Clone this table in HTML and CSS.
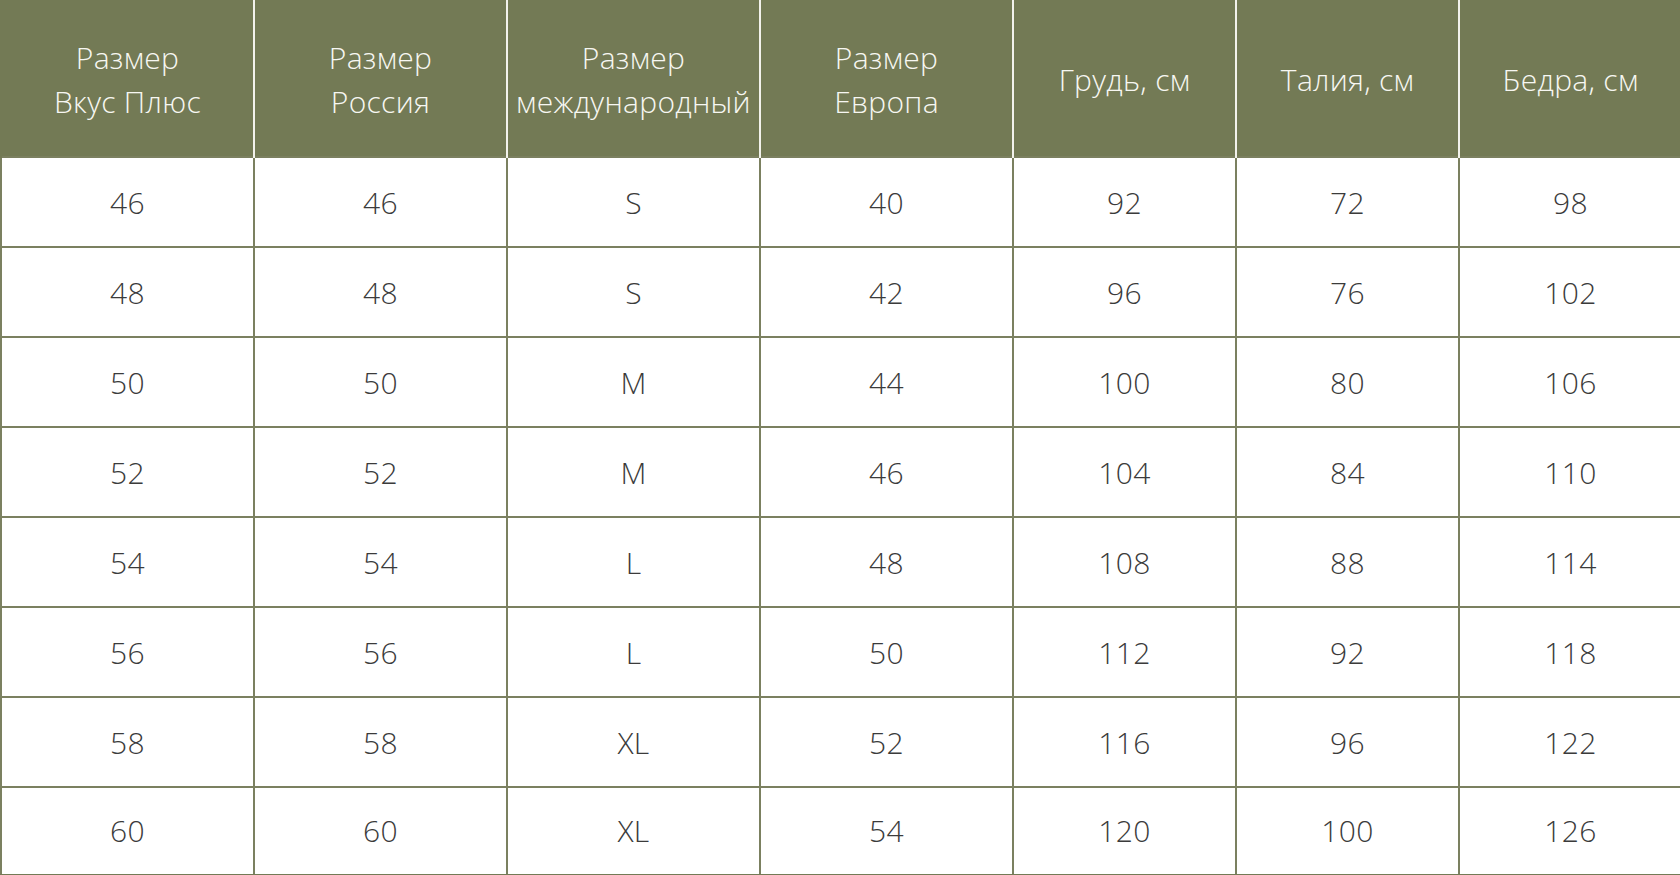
FILE: index.html
```html
<!DOCTYPE html>
<html lang="ru">
<head>
<meta charset="utf-8">
<title>Таблица размеров</title>
<link rel="stylesheet" href="styles.css">
</head>
<body>
<table class="sizes">
  <colgroup>
    <col class="c-wide"><col class="c-wide"><col class="c-wide"><col class="c-wide">
    <col class="c-narrow"><col class="c-narrow"><col class="c-narrow">
  </colgroup>
  <thead>
    <tr class="head-row">
      <th>Размер<br>Вкус Плюс</th>
      <th>Размер<br>Россия</th>
      <th>Размер<br>международный</th>
      <th>Размер<br>Европа</th>
      <th>Грудь, см</th>
      <th>Талия, см</th>
      <th>Бедра, см</th>
    </tr>
  </thead>
  <tbody>
    <tr><td>46</td><td>46</td><td>S</td><td>40</td><td>92</td><td>72</td><td>98</td></tr>
    <tr><td>48</td><td>48</td><td>S</td><td>42</td><td>96</td><td>76</td><td>102</td></tr>
    <tr><td>50</td><td>50</td><td>M</td><td>44</td><td>100</td><td>80</td><td>106</td></tr>
    <tr><td>52</td><td>52</td><td>M</td><td>46</td><td>104</td><td>84</td><td>110</td></tr>
    <tr><td>54</td><td>54</td><td>L</td><td>48</td><td>108</td><td>88</td><td>114</td></tr>
    <tr><td>56</td><td>56</td><td>L</td><td>50</td><td>112</td><td>92</td><td>118</td></tr>
    <tr><td>58</td><td>58</td><td>XL</td><td>52</td><td>116</td><td>96</td><td>122</td></tr>
    <tr class="last"><td>60</td><td>60</td><td>XL</td><td>54</td><td>120</td><td>100</td><td>126</td></tr>
  </tbody>
</table>
</body>
</html>
```

FILE: styles.css
```css
html, body {
  margin: 0;
  padding: 0;
  background: #ffffff;
}

.sizes {
  width: 1680px;
  table-layout: fixed;
  border-collapse: collapse;
  font-family: "Open Sans", "Liberation Sans", sans-serif;
  font-weight: 300;
  font-size: 30px;
  letter-spacing: 0.3px;
}

.c-wide { width: 253px; }
.c-narrow { width: 223px; }

.head-row {
  height: 157px;
}

.sizes th {
  background: #737a55;
  color: #f7f7f2;
  font-weight: 300;
  line-height: 44px;
  padding: 4px 0 0;
  text-align: center;
  vertical-align: middle;
  border-left: 2px solid #f2f2ec;
  border-right: 2px solid #f2f2ec;
  border-top: 0;
  border-bottom: 0;
  white-space: nowrap;
}

.sizes th:first-child { border-left: 2px solid #737a55; }
.sizes th:last-child { border-right: 2px solid #737a55; }

.sizes tbody tr {
  height: 90px;
}

.sizes tbody tr.last {
  height: 88px;
}

.sizes td {
  padding: 0;
  text-align: center;
  vertical-align: middle;
  color: #3b3b3b;
  border: 2px solid #7b8060;
}

.sizes tr.last td {
  border-bottom: 3px solid #737a55;
}
```
